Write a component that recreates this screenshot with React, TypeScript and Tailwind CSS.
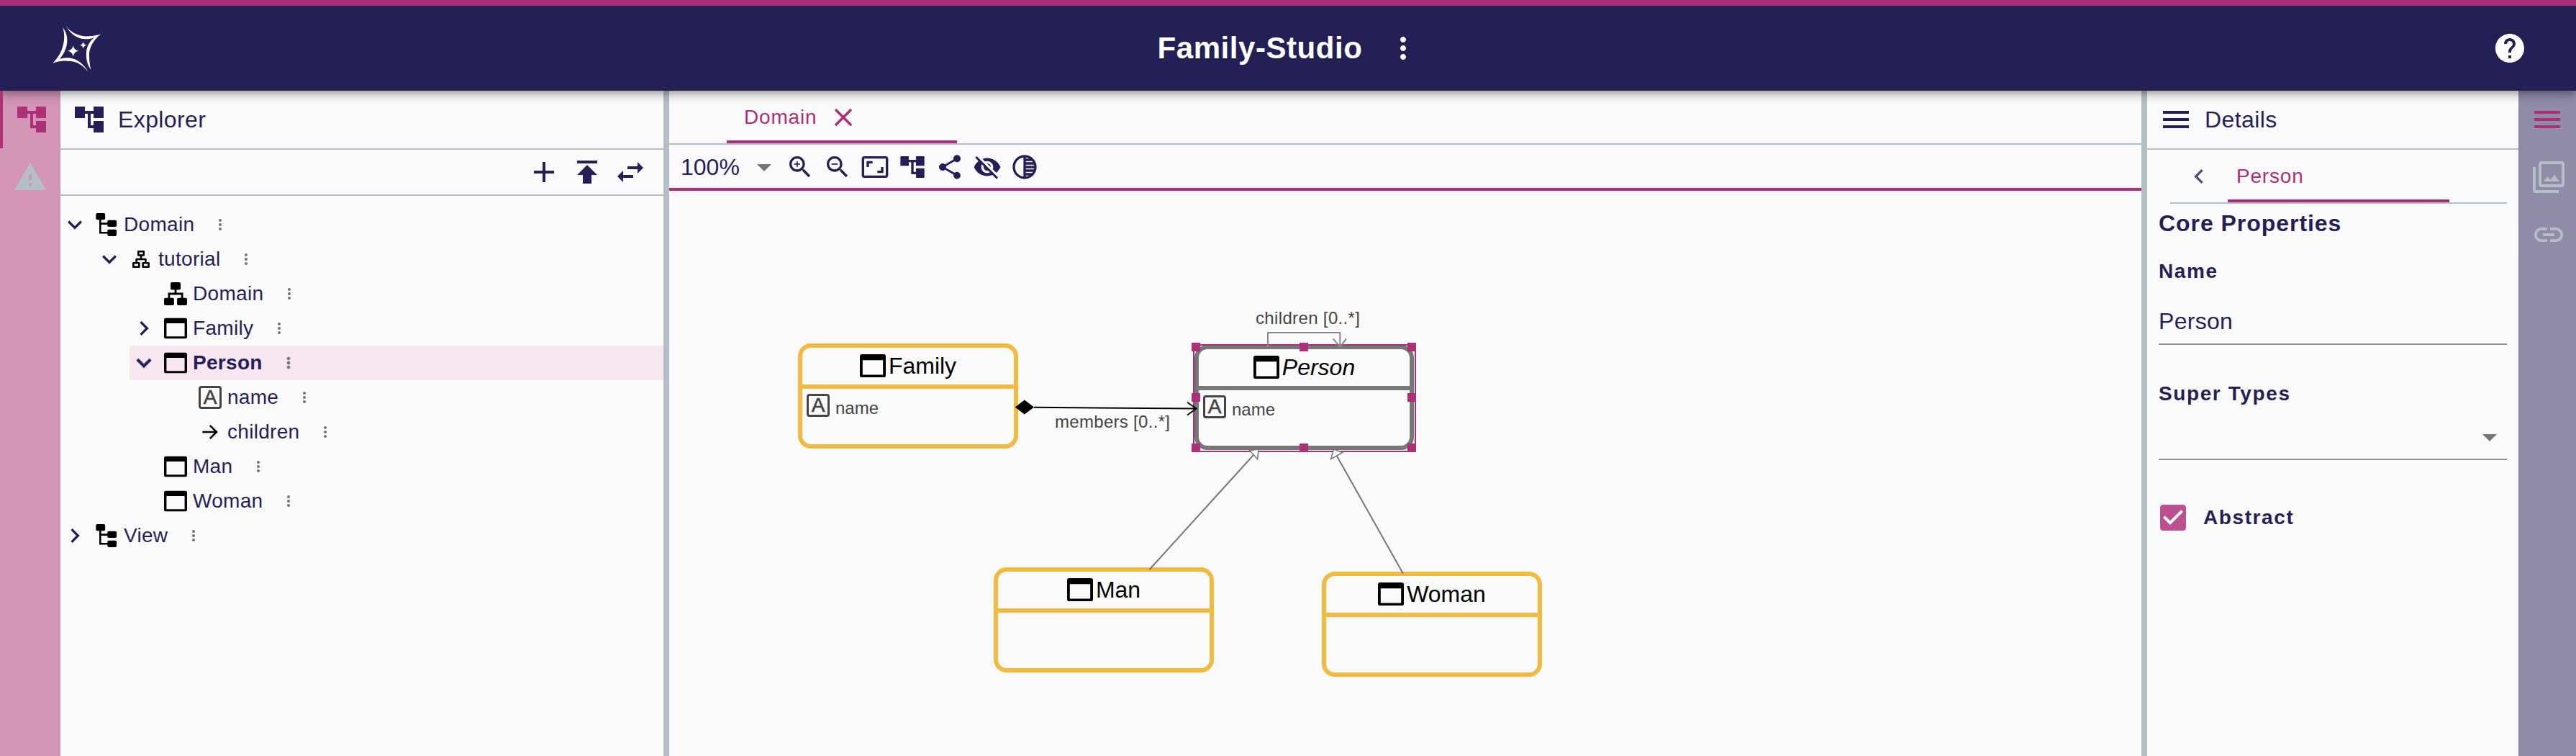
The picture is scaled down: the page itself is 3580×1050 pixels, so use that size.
import React from "react";

const PATHS = {
  accountTree: "M22 11V3h-7v3H9V3H2v8h7V8h2v10h4v3h7v-8h-7v3h-2V8h2v3z",
  warning: "M1 21h22L12 2 1 21zm12-3h-2v-2h2v2zm0-4h-2v-4h2v4z",
  menu: "M3 18h18v-2H3v2zm0-5h18v-2H3v2zm0-7v2h18V6H3z",
  filter:
    "M15.96 10.29l-2.75 3.54-1.96-2.36L8.5 15h11l-3.54-4.71zM3 5H1v16c0 1.1.9 2 2 2h16v-2H3V5zm18-4H7c-1.1 0-2 .9-2 2v14c0 1.1.9 2 2 2h14c1.1 0 2-.9 2-2V3c0-1.1-.9-2-2-2zm0 16H7V3h14v14z",
  link: "M3.9 12c0-1.71 1.39-3.1 3.1-3.1h4V7H7c-2.76 0-5 2.24-5 5s2.24 5 5 5h4v-1.9H7c-1.71 0-3.1-1.39-3.1-3.1zM8 13h8v-2H8v2zm9-6h-4v1.9h4c1.71 0 3.1 1.39 3.1 3.1s-1.39 3.1-3.1 3.1h-4V17h4c2.76 0 5-2.24 5-5s-2.24-5-5-5z",
  add: "M19 13h-6v6h-2v-6H5v-2h6V5h2v6h6v2z",
  publish: "M5 4v2h14V4H5zm0 10h4v6h6v-6h4l-7-7-7 7z",
  swap: "M6.99 11L3 15l3.99 4v-3H14v-2H6.99v-3zM21 9l-3.99-4v3H10v2h7.01v3L21 9z",
  expandMore: "M16.59 8.59 12 13.17 7.41 8.59 6 10l6 6 6-6z",
  chevronRight: "M10 6 8.59 7.41 13.17 12l-4.58 4.59L10 18l6-6z",
  chevronLeft: "M15.41 7.41 14 6l-6 6 6 6 1.41-1.41L10.83 12z",
  moreVert:
    "M12 8c1.1 0 2-.9 2-2s-.9-2-2-2-2 .9-2 2 .9 2 2 2zm0 2c-1.1 0-2 .9-2 2s.9 2 2 2 2-.9 2-2-.9-2-2-2zm0 6c-1.1 0-2 .9-2 2s.9 2 2 2 2-.9 2-2-.9-2-2-2z",
  help: "M12 2C6.48 2 2 6.48 2 12s4.48 10 10 10 10-4.48 10-10S17.52 2 12 2zm1 17h-2v-2h2v2zm2.07-7.75l-.9.92C13.45 12.9 13 13.5 13 15h-2v-.5c0-1.1.45-2.1 1.17-2.83l1.24-1.26c.37-.36.59-.86.59-1.41 0-1.1-.9-2-2-2s-2 .9-2 2H8c0-2.21 1.79-4 4-4s4 1.79 4 4c0 .88-.36 1.68-.93 2.25z",
  close:
    "M19 6.41L17.59 5 12 10.59 6.41 5 5 6.41 10.59 12 5 17.59 6.41 19 12 13.41 17.59 19 19 17.59 13.41 12z",
  arrowDropDown: "M7 10l5 5 5-5z",
  zoomIn:
    "M15.5 14h-.79l-.28-.27C15.41 12.59 16 11.11 16 9.5 16 5.91 13.09 3 9.5 3S3 5.91 3 9.5 5.91 16 9.5 16c1.61 0 3.09-.59 4.23-1.57l.27.28v.79l5 4.99L20.49 19l-4.99-5zm-6 0C7.01 14 5 11.99 5 9.5S7.01 5 9.5 5 14 7.01 14 9.5 11.99 14 9.5 14zM12 10h-2v2H9v-2H7V9h2V7h1v2h2v1z",
  zoomOut:
    "M15.5 14h-.79l-.28-.27C15.41 12.59 16 11.11 16 9.5 16 5.91 13.09 3 9.5 3S3 5.91 3 9.5 5.91 16 9.5 16c1.61 0 3.09-.59 4.23-1.57l.27.28v.79l5 4.99L20.49 19l-4.99-5zm-6 0C7.01 14 5 11.99 5 9.5S7.01 5 9.5 5 14 7.01 14 9.5 11.99 14 9.5 14zM7 9h5v1H7z",
  aspectRatio:
    "M19 12h-2v3h-3v2h5v-5zM7 9h3V7H5v5h2V9zm14-6H3c-1.1 0-2 .9-2 2v14c0 1.1.9 2 2 2h18c1.1 0 2-.9 2-2V5c0-1.1-.9-2-2-2zm0 16.01H3V4.99h18v14.02z",
  share:
    "M18 16.08c-.76 0-1.44.3-1.96.77L8.91 12.7c.05-.23.09-.46.09-.7s-.04-.47-.09-.7l7.05-4.11c.54.5 1.25.81 2.04.81 1.66 0 3-1.34 3-3s-1.34-3-3-3-3 1.34-3 3c0 .24.04.47.09.7L8.04 9.81C7.5 9.31 6.79 9 6 9c-1.66 0-3 1.34-3 3s1.34 3 3 3c.79 0 1.5-.31 2.04-.81l7.12 4.16c-.05.21-.08.43-.08.65 0 1.61 1.31 2.92 2.92 2.92s2.92-1.31 2.92-2.92-1.31-2.92-2.92-2.92z",
  visibilityOff:
    "M12 7c2.76 0 5 2.24 5 5 0 .65-.13 1.26-.36 1.83l2.92 2.92c1.51-1.26 2.7-2.89 3.43-4.75-1.73-4.39-6-7.5-11-7.5-1.4 0-2.74.25-3.98.7l2.16 2.16C10.74 7.13 11.35 7 12 7zM2 4.27l2.28 2.28.46.46C3.08 8.3 1.78 10.02 1 12c1.73 4.39 6 7.5 11 7.5 1.55 0 3.03-.3 4.38-.84l.42.42L19.73 22 21 20.73 3.27 3 2 4.27zM7.53 9.8l1.55 1.55c-.05.21-.08.43-.08.65 0 1.66 1.34 3 3 3 .22 0 .44-.03.65-.08l1.55 1.55c-.67.33-1.41.53-2.2.53-2.76 0-5-2.24-5-5 0-.79.2-1.53.53-2.2zm4.31-.78l3.15 3.15.02-.16c0-1.66-1.34-3-3-3l-.17.01z",
  tonality:
    "M12 2C6.48 2 2 6.48 2 12s4.48 10 10 10 10-4.48 10-10S17.52 2 12 2zm-1 17.93c-3.94-.49-7-3.85-7-7.93s3.05-7.44 7-7.93v15.86zm2-15.86c1.03.13 2 .45 2.87.93H13v-.93zM13 7h5.24c.25.31.48.65.68 1H13V7zm0 3h6.74c.08.33.15.66.19 1H13v-1zm0 9.93V19h2.87c-.87.48-1.84.8-2.87.93zM18.24 17H13v-1h5.92c-.2.35-.43.69-.68 1zm1.5-3H13v-1h6.93c-.04.34-.11.67-.19 1z",
  checkBox:
    "M19 3H5c-1.11 0-2 .9-2 2v14c0 1.1.89 2 2 2h14c1.11 0 2-.9 2-2V5c0-1.1-.89-2-2-2zm-9 14l-5-5 1.41-1.41L10 14.17l7.59-7.59L19 8l-9 9z",
};

type IconName = keyof typeof PATHS;

function Icon({ name, className = "size-12" }: { name: IconName; className?: string }) {
  return (
    <svg viewBox="0 0 24 24" fill="currentColor" className={`shrink-0 ${className}`}>
      <path d={PATHS[name]} />
    </svg>
  );
}

function Logo() {
  return (
    <svg viewBox="220 100 204 201" className="h-[67px] w-[68px] fill-white">
      <path d="M274 102C290 130 330 152 372 149C392 148 405 145 421 140C400 156 380 162 355 161C315 158 288 130 274 102Z" />
      <path d="M421 140C385 170 370 205 373 235C374 258 376 272 380 289C365 268 359 245 361 215C364 185 380 163 400 151Z" />
      <path d="M262 112C268 125 270 145 268 165C264 200 250 232 221 261L242 250C264 232 280 200 281 170C282 145 275 128 262 112Z" />
      <path d="M221 261C255 248 290 250 315 257C338 265 355 280 368 298C358 275 335 252 308 243C285 236 262 238 240 247Z" />
      <path d="M306 187Q309 207 329 210Q309 213 306 233Q303 213 283 210Q303 207 306 187Z" />
      <path d="M348 172Q350 184 362 186Q350 188 348 200Q346 188 334 186Q346 184 348 172Z" />
    </svg>
  );
}

function ModelIcon() {
  return (
    <svg viewBox="0 0 32 32" className="size-8 shrink-0">
      <rect x="1.3" y="0" width="12.8" height="9.2" rx="1.8" />
      <rect x="17.3" y="9.8" width="12.8" height="9.2" rx="1.8" />
      <rect x="17.3" y="22.7" width="12.8" height="9.2" rx="1.8" />
      <path d="M7.3 8v19.2H18M7.3 14.6H18" fill="none" stroke="#000" strokeWidth="2.6" />
    </svg>
  );
}

function PackageIcon() {
  return (
    <svg viewBox="0 0 32 32" className="size-8 shrink-0" fill="none" stroke="#000" strokeWidth="2.6" strokeLinejoin="round">
      <rect x="12.3" y="5.3" width="7.4" height="5.2" />
      <rect x="5.3" y="21.3" width="8" height="5.4" />
      <rect x="18.6" y="21.3" width="8" height="5.4" />
      <path d="M16 10.5v5.4M9.6 21v-5h12.8v5" />
    </svg>
  );
}

function DiagramIcon() {
  return (
    <svg viewBox="0 0 32 32" className="size-8 shrink-0">
      <rect x="9" y="0" width="14" height="10.6" rx="2" />
      <rect x="0" y="21.8" width="13.8" height="10.2" rx="2" />
      <rect x="18" y="21.8" width="14" height="10.2" rx="2" />
      <path d="M16 9v7M6.9 23v-7h18.2v7" fill="none" stroke="#000" strokeWidth="2.8" />
    </svg>
  );
}

function ClassIcon({ className = "size-8" }: { className?: string }) {
  return (
    <svg viewBox="0 0 32 32" className={`shrink-0 ${className}`}>
      <path
        fillRule="evenodd"
        d="M2.6 1.7H29.4A2.6 2.6 0 0 1 32 4.3V27.7A2.6 2.6 0 0 1 29.4 30.3H2.6A2.6 2.6 0 0 1 0 27.7V4.3A2.6 2.6 0 0 1 2.6 1.7ZM3.4 9V27.2H28.6V9Z"
      />
    </svg>
  );
}

function AttributeIcon() {
  return (
    <span className="flex size-8 shrink-0 items-center justify-center rounded-[4px] border-[3px] border-[#444] text-[28px] leading-none tracking-normal text-[#444] [-webkit-text-stroke:0.6px_#444]">
      A
    </span>
  );
}

function ReferenceIcon() {
  return (
    <svg viewBox="0 0 32 32" className="size-8 shrink-0" fill="none" stroke="#000" strokeWidth="2.6">
      <path d="M5.3 16H25M15.8 6.8 25 16l-9.2 9.2" />
    </svg>
  );
}

type Row = {
  label: string;
  indent: string;
  icon: React.ReactNode;
  toggle?: "open" | "closed";
  selected?: boolean;
};

const ROWS: Row[] = [
  { label: "Domain", indent: "ml-0", icon: <ModelIcon />, toggle: "open" },
  { label: "tutorial", indent: "ml-12", icon: <PackageIcon />, toggle: "open" },
  { label: "Domain", indent: "ml-24", icon: <DiagramIcon /> },
  { label: "Family", indent: "ml-24", icon: <ClassIcon />, toggle: "closed" },
  { label: "Person", indent: "ml-24", icon: <ClassIcon />, toggle: "open", selected: true },
  { label: "name", indent: "ml-36", icon: <AttributeIcon /> },
  { label: "children", indent: "ml-36", icon: <ReferenceIcon /> },
  { label: "Man", indent: "ml-24", icon: <ClassIcon /> },
  { label: "Woman", indent: "ml-24", icon: <ClassIcon /> },
  { label: "View", indent: "ml-0", icon: <ModelIcon />, toggle: "closed" },
];

function TreeRow({ row }: { row: Row }) {
  const focus = row.selected ? "stroke-[#7b929b] [paint-order:stroke]" : "";
  return (
    <div className={`flex h-12 items-center ${row.indent} ${row.selected ? "bg-[#f7e5ef] font-bold" : ""}`}>
      <div className="flex w-12 shrink-0 items-center">
        {row.toggle && (
          <Icon name={row.toggle === "open" ? "expandMore" : "chevronRight"} className={`size-10 ${focus}`} />
        )}
      </div>
      {row.icon}
      <span className="ml-2 text-[28px] tracking-[0.3px]">{row.label}</span>
      <Icon name="moreVert" className={`ml-6 size-6 text-[#737373] ${focus}`} />
    </div>
  );
}

function RailItem({ name, side, active }: { name: IconName; side: "left" | "right"; active?: boolean }) {
  const tone = active ? "text-[#ad2f75]" : "text-[#b3bfc5]";
  return (
    <div className={`flex h-20 w-full ${side === "right" ? "flex-row-reverse" : ""} ${tone}`}>
      {active && <div className="relative z-20 w-1 bg-[#ad2f75]" />}
      <div className="flex flex-1 items-center justify-center">
        <Icon name={name} />
      </div>
    </div>
  );
}

function ClassNode({
  name,
  place,
  tone = "border-[#f2ba40]",
  abstract,
  attribute,
}: {
  name: string;
  place: string;
  tone?: string;
  abstract?: boolean;
  attribute?: string;
}) {
  return (
    <div className={`absolute h-[146px] rounded-[18px] border-[6px] text-black ${tone} ${place}`}>
      <div className={`flex h-[57px] items-center justify-center gap-1 border-b-[6px] pb-0.5 ${tone}`}>
        <ClassIcon className="size-9" />
        <span className={`text-[32px] leading-none ${abstract ? "italic" : ""}`}>{name}</span>
      </div>
      {attribute && (
        <div className="flex gap-2 pl-1.5 pt-[7px] text-[#444]">
          <AttributeIcon />
          <span className="pt-1 text-[24px] leading-8">{attribute}</span>
        </div>
      )}
    </div>
  );
}

function Edges() {
  return (
    <svg viewBox="930 265 2046 785" className="absolute inset-0 size-full" fill="none">
      <path d="M1762 482V462H1862.3V482" stroke="#8a8a8a" strokeWidth="2" />
      <path d="M1852.7 470.3 1862.3 482 1871 470.3" stroke="#8a8a8a" strokeWidth="2" />
      <path d="M1437 565.7 1662 567.5M1650 558.7 1662.5 567.5 1650 576.5" stroke="#000" strokeWidth="2" />
      <path d="M1410.7 565.6 1423.8 555.5 1437 565.6 1423.8 575.5Z" fill="#000" />
      <path d="M1597.5 791 1742 632M1950 796.7 1857.7 633" stroke="#777" strokeWidth="2" />
      <path d="M1749 624 1736.7 625.7 1747.7 637.7ZM1853.3 624 1865.7 628.5 1849.7 637.7Z" fill="#fff" stroke="#777" strokeWidth="1.6" />
    </svg>
  );
}

const HANDLES = [
  "left-[726px] top-[211px]",
  "left-[876px] top-[211px]",
  "left-[1026px] top-[211px]",
  "left-[726px] top-[281px]",
  "left-[1026px] top-[281px]",
  "left-[726px] top-[351px]",
  "left-[876px] top-[351px]",
  "left-[1026px] top-[351px]",
];

const TOOLS: IconName[] = ["zoomIn", "zoomOut", "aspectRatio", "accountTree", "share", "visibilityOff", "tonality"];

export default function App() {
  return (
    <div className="flex h-[1050px] w-[3580px] flex-col overflow-hidden bg-[#fafafa] font-['Liberation_Sans',Arial,sans-serif] text-[#261e57]">
      <header className="relative z-10 grid h-[126px] shrink-0 grid-cols-[1fr_auto_1fr] items-center border-t-8 border-[#a93073] bg-[#241f54] text-white shadow-[0_4px_8px_-2px_rgba(0,0,0,0.2),0_8px_10px_0_rgba(0,0,0,0.14),0_2px_20px_0_rgba(0,0,0,0.12)]">
        <div className="pl-[73px]">
          <Logo />
        </div>
        <div className="flex items-center gap-[33px] pl-[3px]">
          <h1 className="text-[42px] font-bold leading-none tracking-[0.55px]">Family-Studio</h1>
          <Icon name="moreVert" />
        </div>
        <div className="flex justify-end pr-[68px]">
          <Icon name="help" />
        </div>
      </header>

      <div className="flex min-h-0 flex-1">
        <nav className="w-[84px] shrink-0 bg-[#d494b6]">
          <RailItem name="accountTree" side="left" active />
          <RailItem name="warning" side="left" />
        </nav>

        <aside className="w-[838px] shrink-0">
          <div className="flex h-[82px] items-center gap-4 border-b-2 border-[#b3bfc5] pl-4">
            <Icon name="accountTree" />
            <span className="text-[32px] tracking-[0.4px]">Explorer</span>
          </div>
          <div className="flex h-16 items-center justify-end gap-3 border-b-2 border-[#b3bfc5] pr-[22px]">
            <Icon name="add" />
            <Icon name="publish" />
            <Icon name="swap" />
          </div>
          <div className="pt-4">
            {ROWS.map((row, i) => (
              <TreeRow key={i} row={row} />
            ))}
          </div>
        </aside>

        <div className="w-2 shrink-0 bg-[#b3bfc5]" />

        <main className="flex w-[2046px] shrink-0 flex-col">
          <div className="h-[75px] shrink-0 border-b-2 border-[#b3bfc5] pl-20">
            <div className="flex h-[73px] w-80 items-center border-b-4 border-[#ad2f75] pl-6 pt-1 text-[#ad2f75]">
              <span className="text-[28px] tracking-[0.8px]">Domain</span>
              <Icon name="close" className="ml-4 size-[42px]" />
            </div>
          </div>
          <div className="flex h-16 shrink-0 items-center border-b-4 border-[#ad2f75] pl-4 pt-0.5">
            <span className="w-[92px] text-[32px]">100%</span>
            <Icon name="arrowDropDown" className="size-12 text-[#757575]" />
            <div className="ml-1.5 flex gap-3">
              {TOOLS.map((t) => (
                <Icon key={t} name={t} className="size-10" />
              ))}
            </div>
          </div>
          <div className="relative flex-1">
            <ClassNode name="Family" place="left-[179px] top-[212px] w-[306px]" attribute="name" />
            <ClassNode
              name="Person"
              place="left-[730px] top-[214px] w-[305px]"
              tone="border-[#777]"
              abstract
              attribute="name"
            />
            <ClassNode name="Man" place="left-[451px] top-[523px] w-[306px]" />
            <ClassNode name="Woman" place="left-[907px] top-[529px] w-[306px]" />
            <div className="absolute left-[728px] top-[213px] h-[150px] w-[310px] border-2 border-[#ad2f75]" />
            <Edges />
            {HANDLES.map((place) => (
              <div key={place} className={`absolute size-3 bg-[#ad2f75] ${place}`} />
            ))}
            <span className="absolute left-[815px] top-[161px] text-[24px] leading-8 tracking-[0.35px] text-[#444]">
              children [0..*]
            </span>
            <span className="absolute left-[536px] top-[305px] text-[24px] leading-8 tracking-[0.3px] text-[#444]">
              members [0..*]
            </span>
          </div>
        </main>

        <div className="w-2 shrink-0 bg-[#b3bfc5]" />

        <aside className="w-[516px] shrink-0">
          <div className="flex h-[82px] items-center gap-4 border-b-2 border-[#b3bfc5] pl-4">
            <Icon name="menu" />
            <span className="text-[32px] tracking-[0.4px]">Details</span>
          </div>
          <div className="ml-8 mr-4 flex h-[75px] border-b-2 border-[#b3bfc5]">
            <div className="flex w-20 items-center pl-5 opacity-80">
              <Icon name="chevronLeft" className="size-10" />
            </div>
            <div className="flex w-[308px] items-center border-b-4 border-[#ad2f75] pl-3 pt-1 text-[28px] tracking-[0.8px] text-[#ad2f75]">
              Person
            </div>
          </div>
          <div className="flex flex-col px-4">
            <h2 className="text-[32px] font-bold leading-[54px] tracking-[0.95px]">Core Properties</h2>
            <label className="mt-5 text-[28px] font-bold leading-10 tracking-[1.6px]">Name</label>
            <div className="mt-[18px] flex h-16 items-center border-b-2 border-[#919191] text-[32px] tracking-[0.3px]">
              Person
            </div>
            <label className="mt-12 text-[28px] font-bold leading-10 tracking-[1.6px]">Super Types</label>
            <div className="mt-2.5 flex h-[62px] items-center justify-end border-b-2 border-[#919191]">
              <Icon name="arrowDropDown" className="size-12 text-[#757575]" />
            </div>
            <div className="-ml-1 mt-14 flex h-12 items-center gap-[18px]">
              <Icon name="checkBox" className="size-12 text-[#bd5090]" />
              <span className="text-[28px] font-bold tracking-[1.6px]">Abstract</span>
            </div>
          </div>
        </aside>

        <nav className="w-[84px] shrink-0 bg-[#8f8ba9]">
          <RailItem name="menu" side="right" active />
          <RailItem name="filter" side="right" />
          <RailItem name="link" side="right" />
        </nav>
      </div>
    </div>
  );
}
